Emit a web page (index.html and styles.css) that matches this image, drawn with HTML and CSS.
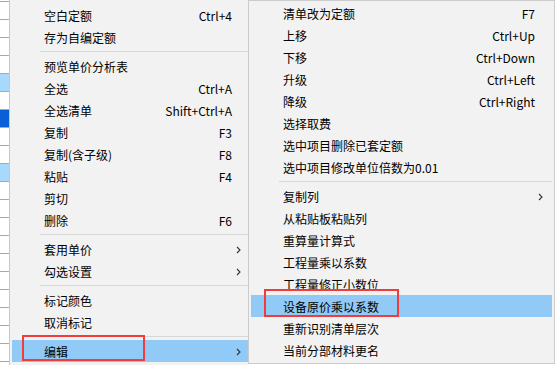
FILE: index.html
```html
<!DOCTYPE html>
<html lang="zh-CN">
<head>
    <meta charset="UTF-8">
    <title>右键菜单</title>
    <link rel="stylesheet" href="styles.css">
</head>
<body>
    <div class="screen">
        <!-- Table behind the menu -->
        <div class="grid-strip">
            <div class="grid-row"></div>
            <div class="grid-row"></div>
            <div class="grid-row"></div>
            <div class="grid-row"></div>
            <div class="grid-row selected"></div>
            <div class="grid-row"></div>
            <div class="grid-row current"></div>
            <div class="grid-row"></div>
            <div class="grid-row"></div>
            <div class="grid-row selected"></div>
            <div class="grid-row"></div>
            <div class="grid-row"></div>
            <div class="grid-row"></div>
            <div class="grid-row"></div>
            <div class="grid-row"></div>
            <div class="grid-row"></div>
            <div class="grid-row"></div>
            <div class="grid-row"></div>
            <div class="grid-row"></div>
            <div class="grid-row"></div>
            <div class="grid-row"></div>
        </div>

        <!-- Context menu -->
        <div class="menu main-menu">
            <div class="menu-item"><span class="label">空白定额</span><span class="shortcut">Ctrl+4</span></div>
            <div class="menu-item"><span class="label">存为自编定额</span></div>
            <div class="menu-sep"></div>
            <div class="menu-item"><span class="label">预览单价分析表</span></div>
            <div class="menu-item"><span class="label">全选</span><span class="shortcut">Ctrl+A</span></div>
            <div class="menu-item"><span class="label">全选清单</span><span class="shortcut">Shift+Ctrl+A</span></div>
            <div class="menu-item"><span class="label">复制</span><span class="shortcut">F3</span></div>
            <div class="menu-item"><span class="label">复制(含子级)</span><span class="shortcut">F8</span></div>
            <div class="menu-item"><span class="label">粘贴</span><span class="shortcut">F4</span></div>
            <div class="menu-item"><span class="label">剪切</span></div>
            <div class="menu-item"><span class="label">删除</span><span class="shortcut">F6</span></div>
            <div class="menu-sep"></div>
            <div class="menu-item has-sub"><span class="label">套用单价</span>
                <svg class="arrow" width="5" height="8" viewBox="0 0 5 8"><path d="M1 1 L4 4 L1 7" fill="none" stroke="#333" stroke-width="1.1"/></svg>
            </div>
            <div class="menu-item has-sub"><span class="label">勾选设置</span>
                <svg class="arrow" width="5" height="8" viewBox="0 0 5 8"><path d="M1 1 L4 4 L1 7" fill="none" stroke="#333" stroke-width="1.1"/></svg>
            </div>
            <div class="menu-sep"></div>
            <div class="menu-item"><span class="label">标记颜色</span></div>
            <div class="menu-item"><span class="label">取消标记</span></div>
            <div class="menu-sep"></div>
            <div class="menu-item has-sub active"><span class="label">编辑</span>
                <svg class="arrow" width="5" height="8" viewBox="0 0 5 8"><path d="M1 1 L4 4 L1 7" fill="none" stroke="#333" stroke-width="1.1"/></svg>
                <div class="mark mark-left"></div>
            </div>
        </div>

        <!-- Submenu: 编辑 -->
        <div class="menu sub-menu">
            <div class="menu-item"><span class="label">清单改为定额</span><span class="shortcut">F7</span></div>
            <div class="menu-item"><span class="label">上移</span><span class="shortcut">Ctrl+Up</span></div>
            <div class="menu-item"><span class="label">下移</span><span class="shortcut">Ctrl+Down</span></div>
            <div class="menu-item"><span class="label">升级</span><span class="shortcut">Ctrl+Left</span></div>
            <div class="menu-item"><span class="label">降级</span><span class="shortcut">Ctrl+Right</span></div>
            <div class="menu-item"><span class="label">选择取费</span></div>
            <div class="menu-item"><span class="label">选中项目删除已套定额</span></div>
            <div class="menu-item"><span class="label">选中项目修改单位倍数为0.01</span></div>
            <div class="menu-sep"></div>
            <div class="menu-item has-sub"><span class="label">复制列</span>
                <svg class="arrow" width="5" height="8" viewBox="0 0 5 8"><path d="M1 1 L4 4 L1 7" fill="none" stroke="#333" stroke-width="1.1"/></svg>
            </div>
            <div class="menu-item"><span class="label">从粘贴板粘贴列</span></div>
            <div class="menu-item"><span class="label">重算量计算式</span></div>
            <div class="menu-item"><span class="label">工程量乘以系数</span></div>
            <div class="menu-item"><span class="label">工程量修正小数位</span></div>
            <div class="menu-item active"><span class="label">设备原价乘以系数</span>
                <div class="mark mark-right"></div>
            </div>
            <div class="menu-item"><span class="label">重新识别清单层次</span></div>
            <div class="menu-item"><span class="label">当前分部材料更名</span></div>
        </div>
    </div>
</body>
</html>
```

FILE: styles.css
```css
* {
    margin: 0;
    padding: 0;
    box-sizing: border-box;
}

body {
    background: #ffffff;
    font-family: "Noto Sans CJK SC", "Noto Sans", sans-serif;
    font-size: 12px;
    color: #000;
    overflow: hidden;
}

.screen {
    display: flex;
    width: 556px;
    height: 365px;
    overflow: hidden;
}

/* Table rows peeking out on the left */
.grid-strip {
    width: 9px;
    flex-shrink: 0;
    padding-top: 1px;
    background: #fff;
}

.grid-row {
    height: 18px;
    border-top: 1px solid #a9a9a9;
}

.grid-row.selected {
    background: #a8d8fb;
}

.grid-row.current {
    background: #0a5fd6;
}

/* Menus */
.menu {
    background: #f2f2f2;
    flex-shrink: 0;
}

.main-menu {
    width: 239px;
    height: 366px;
    padding: 4px 0 0 2px;
    border-left: 1px solid #c8c8c8;
}

.sub-menu {
    width: 307px;
    height: 364px;
    padding: 1px 2px;
    border: 1px solid #cccccc;
}

.menu-item {
    position: relative;
    display: flex;
    align-items: center;
    height: 22px;
    padding: 0 16px 0 32px;
    white-space: nowrap;
}

.sub-menu .menu-item {
    padding-right: 17px;
}

.menu-item .label {
    flex: 1;
}

.menu-item.active {
    background: #91c9f7;
}

.shortcut {
    text-align: right;
}

.arrow {
    position: absolute;
    right: 7px;
    top: 8px;
}

.sub-menu .arrow {
    right: 9px;
}

.menu-sep {
    height: 1px;
    margin: 3px 0 3px 28px;
    background: #d7d7d7;
}

/* Red annotation boxes */
.mark {
    position: absolute;
    border: 2px solid #f23b3b;
}

.mark-left {
    left: 10px;
    top: -5px;
    width: 123px;
    height: 26px;
}

.mark-right {
    left: 13px;
    top: -6px;
    width: 135px;
    height: 28px;
}
```
